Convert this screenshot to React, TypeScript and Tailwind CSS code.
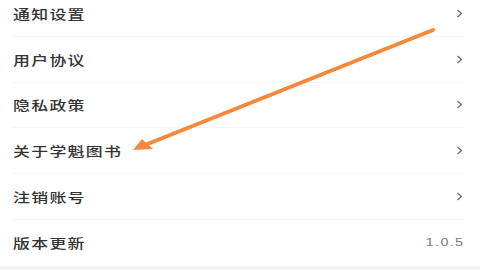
import React from 'react';

interface Item {
  label: string;
  value?: string;
}

const items: Item[] = [
  { label: '通知设置' },
  { label: '用户协议' },
  { label: '隐私政策' },
  { label: '关于学魁图书' },
  { label: '注销账号' },
  { label: '版本更新', value: '1.0.5' },
];

const Chevron = () => (
  <svg width="7" height="9" viewBox="0 0 7 9" className="shrink-0">
    <polyline points="1.5,1 5.5,4.5 1.5,8" fill="none" stroke="#6b6b6b" strokeWidth="1.3" />
  </svg>
);

export default function App() {
  return (
    <div
      className="relative w-[480px] h-[270px] overflow-hidden bg-white flex flex-col"
      style={{ fontFamily: '"Noto Sans CJK SC", "Noto Sans", sans-serif' }}
    >
      <div className="mt-[-9px] flex flex-col">
        {items.map((item, i) => (
          <div
            key={item.label}
            className={`ml-[13px] mr-[15px] h-[45.75px] flex items-center justify-between ${
              i < items.length - 1 ? 'border-b border-[#f5f5f5]' : ''
            }`}
          >
            <span className="inline-block origin-left scale-x-[1.3] text-[13px] tracking-[1px] font-medium text-[#333] leading-none">
              {item.label}
            </span>
            {item.value ? (
              <span
                className="inline-block origin-right scale-x-[1.3] text-[11px] tracking-[1px] text-[#7a7a7a] leading-none pr-[1px]"
                style={{ fontFamily: '"Liberation Sans", sans-serif' }}
              >
                {item.value}
              </span>
            ) : (
              <span className="pr-[2px]">
                <Chevron />
              </span>
            )}
          </div>
        ))}
      </div>
      <div className="flex-1 bg-[#f4f4f4]" />

      {/* annotation arrow */}
      <svg className="absolute inset-0 pointer-events-none" width="480" height="270" viewBox="0 0 480 270">
        <line x1="433" y1="30" x2="145" y2="145" stroke="#f5883a" strokeWidth="4" strokeLinecap="round" />
        <polygon points="133,150 142,139 153,149" fill="#f5883a" />
      </svg>
    </div>
  );
}
